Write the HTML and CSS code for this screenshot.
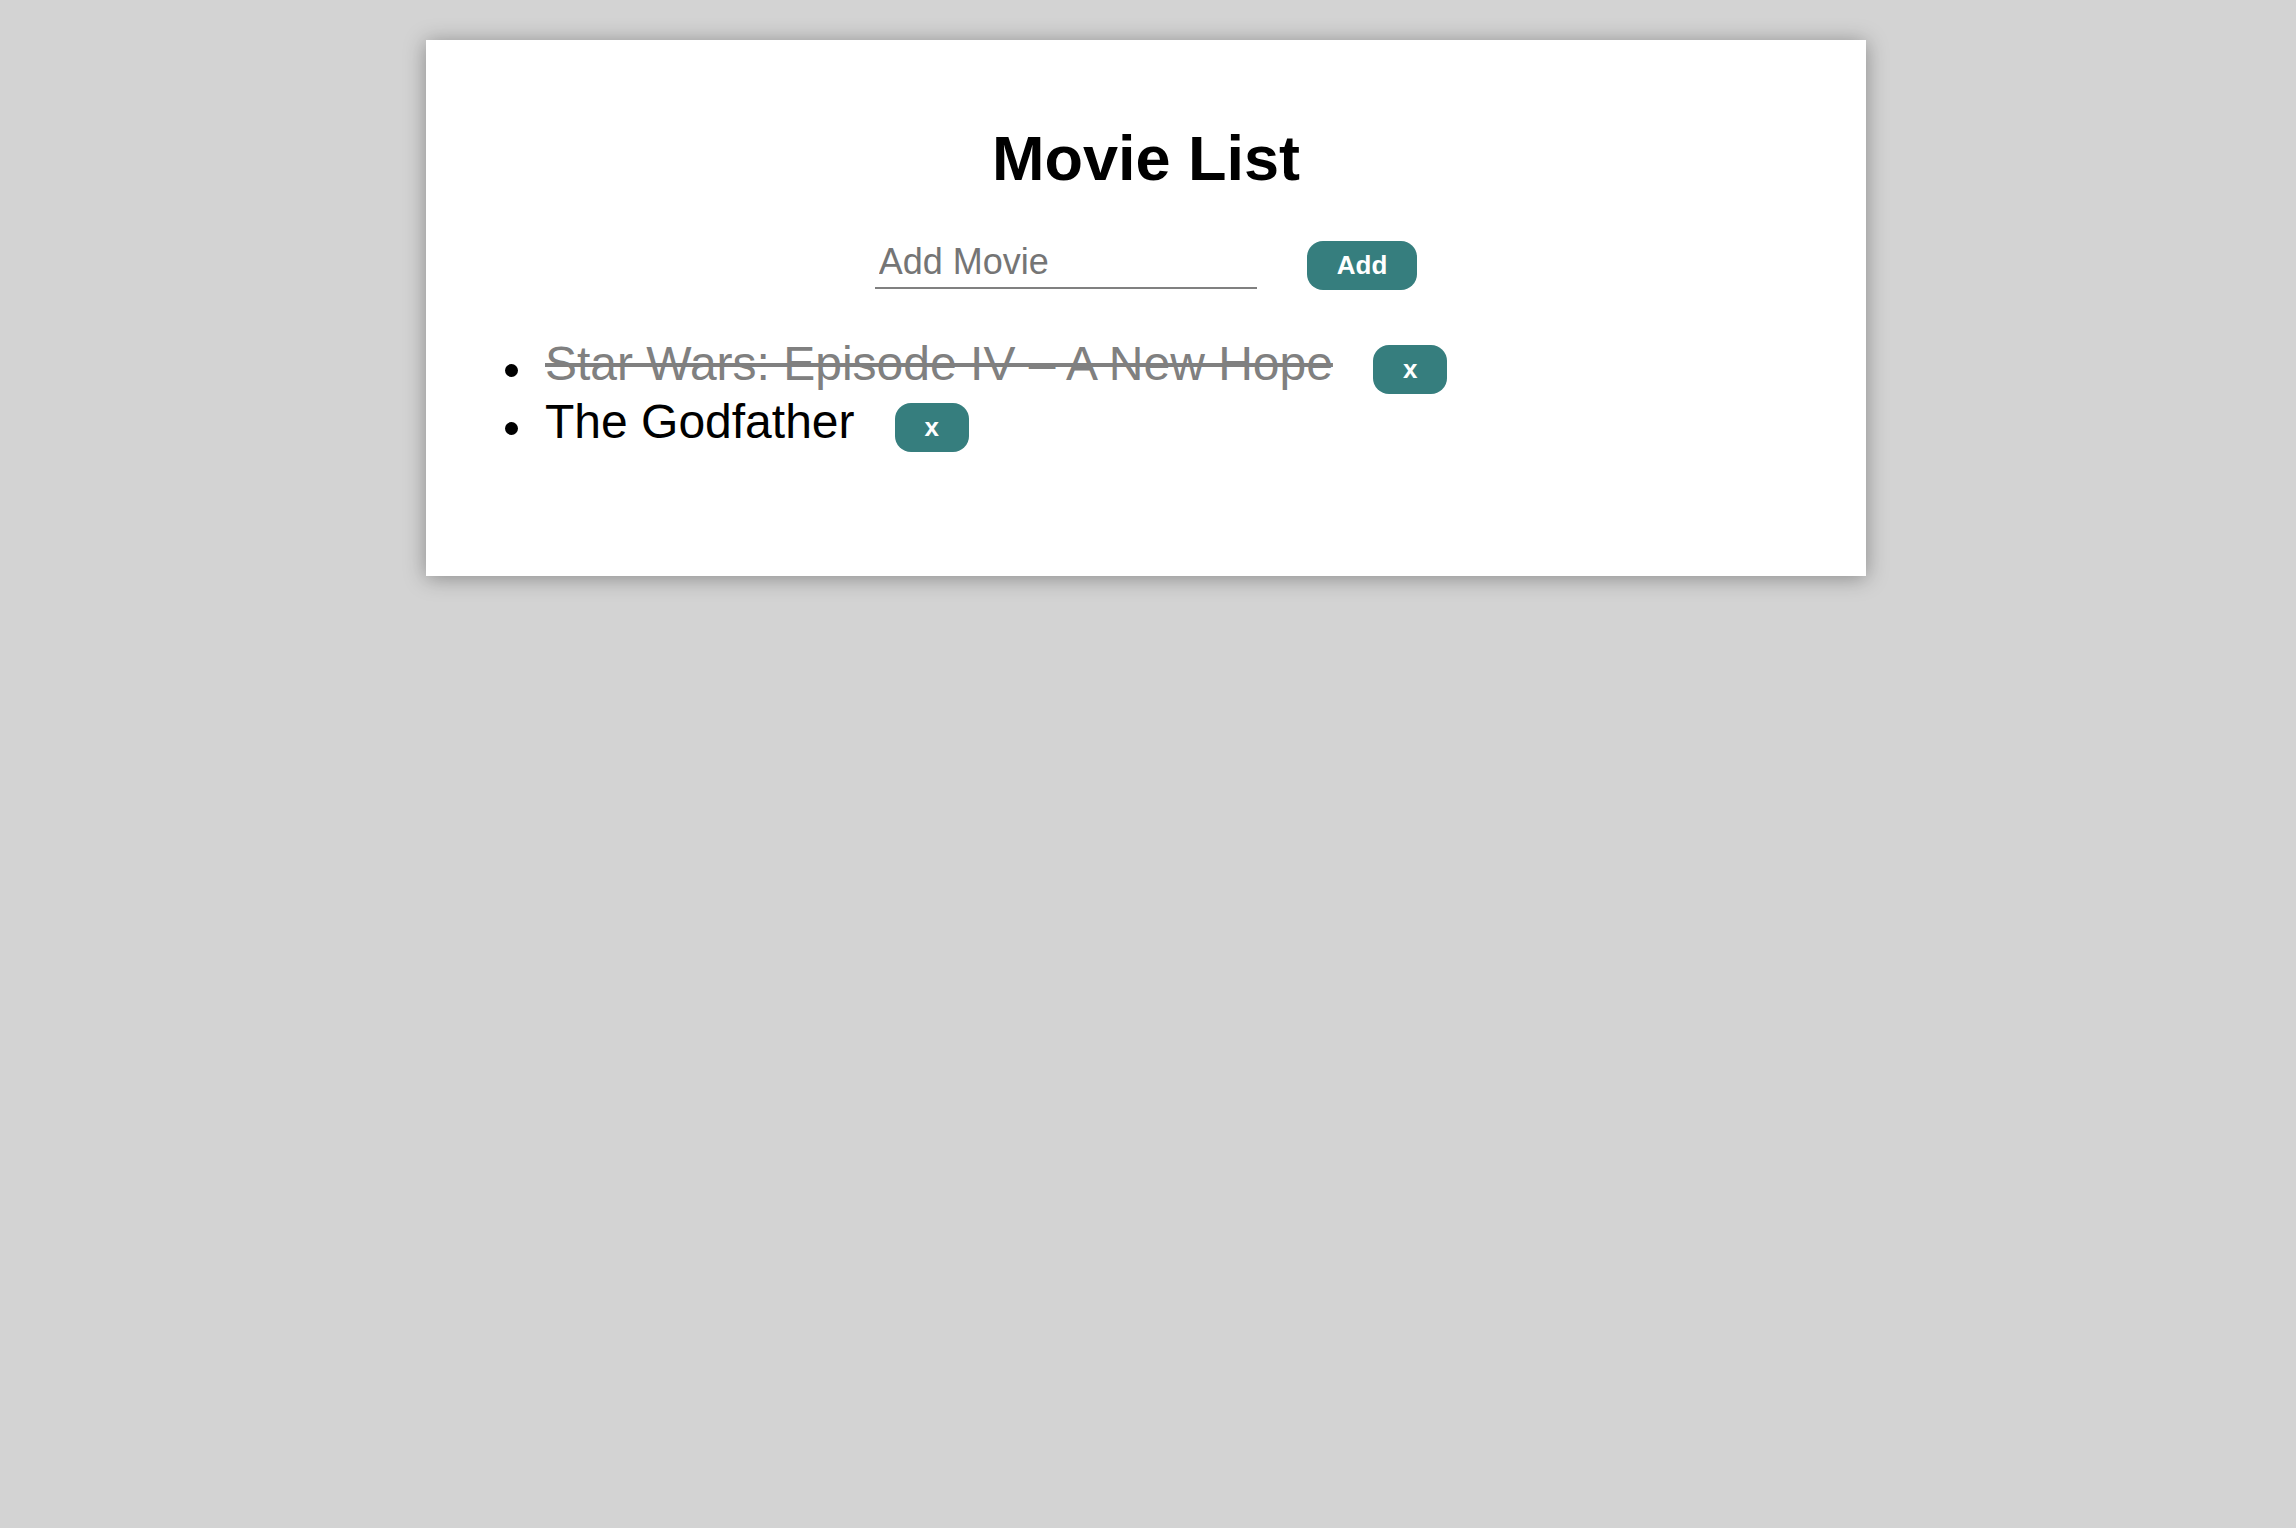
FILE: index.html
```html
<!DOCTYPE html>
<html lang="en">
<head>
<meta charset="utf-8">
<title>Movie List</title>
<link rel="stylesheet" href="styles.css">
</head>
<body>
  <main class="card">
    <h1 class="title">Movie List</h1>
    <form class="add-form">
      <input class="movie-input" type="text" placeholder="Add Movie">
      <button class="btn" type="button">Add</button>
    </form>
    <ul class="movie-list">
      <li class="movie-item">
        <span class="movie-title done">Star Wars: Episode IV – A New Hope</span>
        <button class="btn remove" type="button">x</button>
      </li>
      <li class="movie-item">
        <span class="movie-title">The Godfather</span>
        <button class="btn remove" type="button">x</button>
      </li>
    </ul>
  </main>
</body>
</html>
```
FILE: styles.css
```css
html, body {
  margin: 0;
  padding: 0;
}

body {
  min-height: 100vh;
  padding: 40px 0;
  box-sizing: border-box;
  background: #d3d3d3;
  font-family: "Liberation Sans", Arial, Helvetica, sans-serif;
  color: #000;
}

.card {
  box-sizing: border-box;
  width: 1440px;
  margin: 0 auto 0 calc(50% - 722px);
  padding: 82px 0 124.5px;
  background: #fff;
  box-shadow: 0 2px 20px rgba(0, 0, 0, 0.35);
}

.title {
  margin: 0;
  font-size: 63px;
  font-weight: bold;
  line-height: normal;
  text-align: center;
}

.add-form {
  display: flex;
  justify-content: center;
  align-items: baseline;
  gap: 50px;
  margin: 44.5px 0 0;
}

.movie-input {
  box-sizing: border-box;
  width: 382px;
  padding: 2px 4px 4px;
  border: none;
  border-bottom: 2px solid #808080;
  outline: none;
  background: transparent;
  font-family: "Liberation Sans", Arial, sans-serif;
  font-size: 36px;
  line-height: normal;
  color: #000;
}

.movie-input::placeholder {
  color: #757575;
  opacity: 1;
}

.btn {
  border: none;
  border-radius: 16px;
  padding: 10px 30px;
  background: #367e7e;
  color: #fff;
  font-family: "Liberation Sans", Arial, sans-serif;
  font-size: 26px;
  font-weight: bold;
  line-height: 29px;
  cursor: pointer;
}

.movie-list {
  list-style: none;
  margin: 46px 0 0 78.5px;
  padding: 0;
}

.movie-item {
  display: flex;
  align-items: flex-start;
}

.movie-item::before {
  content: "";
  flex: none;
  width: 13px;
  height: 13px;
  border-radius: 50%;
  background: #000;
  margin: 28.5px 27.5px 0 0;
}

.movie-title {
  font-size: 48px;
  line-height: 56px;
}

.movie-title.done {
  color: #808080;
  text-decoration: line-through;
}

.remove {
  margin: 9px 0 0 40px;
}
```
